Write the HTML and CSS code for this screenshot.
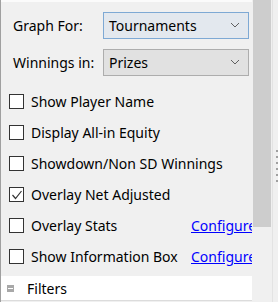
FILE: index.html
```html
<!DOCTYPE html>
<html lang="en">
<head>
    <meta charset="UTF-8">
    <title>Graph Options</title>
    <link rel="stylesheet" href="styles.css">
</head>
<body>

<div class="window">
    <div class="panel">
        <div class="options">
            <!-- Combo rows -->
            <div class="field">
                <label class="field-label">Graph For:</label>
                <div class="combo combo-focus">
                    <span>Tournaments</span>
                    <svg class="chevron" width="10" height="6" viewBox="0 0 10 6"><path d="M1 1 L5 5 L9 1" fill="none" stroke="#606060" stroke-width="1"/></svg>
                </div>
            </div>
            <div class="field">
                <label class="field-label">Winnings in:</label>
                <div class="combo">
                    <span>Prizes</span>
                    <svg class="chevron" width="10" height="6" viewBox="0 0 10 6"><path d="M1 1 L5 5 L9 1" fill="none" stroke="#606060" stroke-width="1"/></svg>
                </div>
            </div>

            <!-- Checkbox rows -->
            <div class="checks">
                <div class="check"><span class="box"></span>Show Player Name</div>
                <div class="check"><span class="box"></span>Display All-in Equity</div>
                <div class="check"><span class="box"></span>Showdown/Non SD Winnings</div>
                <div class="check"><span class="box">
                    <svg width="12" height="12" viewBox="0 0 12 12"><path d="M1.5 6 L4.5 9.5 L10.5 2" fill="none" stroke="#333" stroke-width="1.2"/></svg>
                </span>Overlay Net Adjusted</div>
                <div class="check"><span class="box"></span><span class="check-text">Overlay Stats</span><a class="link" href="#">Configure</a></div>
                <div class="check"><span class="box"></span><span class="check-text">Show Information Box</span><a class="link" href="#">Configure</a></div>
            </div>
        </div>

        <div class="section">
            <span class="collapse"></span>
            Filters
        </div>
    </div>

    <div class="scrollbar"><div class="thumb"></div></div>
    <div class="grip"><div class="dots"></div></div>
</div>

</body>
</html>
```

FILE: styles.css
```css
body {
    margin: 0;
    padding: 0;
    background-color: #f0f0f0;
    font-family: "Noto Sans", "Open Sans", sans-serif;
    font-size: 14px;
    color: #000;
}
.window {
    display: flex;
    height: 302px;
    overflow: hidden;
}
.panel {
    width: 252px;
    border-left: 1px solid #a0a0a0;
    overflow: hidden;
}
.options {
    border-top: 2px solid #fbfbfb;
    padding-top: 9px;
    height: 265px;
}
.field {
    display: flex;
    align-items: center;
    height: 28px;
    margin-bottom: 9px;
}
.field-label {
    width: 90px;
    padding-left: 12px;
}
.combo {
    width: 146px;
    height: 27px;
    border: 1px solid #adadad;
    background-color: #e1e1e1;
    display: flex;
    align-items: center;
    justify-content: space-between;
    padding: 0 8px 0 5px;
    box-sizing: border-box;
}
.combo-focus {
    border-color: #7ea9d4;
    background-color: #e3e8ee;
}
.chevron {
    display: block;
}
.checks {
    margin-top: 10px;
}
.check {
    display: flex;
    align-items: center;
    height: 31px;
    padding-left: 8px;
    white-space: nowrap;
}
.box {
    flex: none;
    width: 13px;
    height: 13px;
    border: 1px solid #333;
    background-color: #fff;
    margin-right: 7px;
    display: flex;
    align-items: center;
    justify-content: center;
}
.check-text {
    flex: none;
    width: 160px;
}
.link {
    color: #0000ff;
}
.section {
    background-color: #fff;
    border-bottom: 1px solid #dcdcdc;
    height: 24px;
    display: flex;
    align-items: center;
    padding-left: 6px;
}
.collapse {
    width: 7px;
    height: 7px;
    background-color: #a8a8a8;
    margin-right: 13px;
    position: relative;
}
.collapse::after {
    content: "";
    position: absolute;
    left: 1px;
    top: 3px;
    width: 5px;
    height: 1px;
    background-color: #fff;
}
.scrollbar {
    width: 20px;
    background-color: #f0f0f0;
}
.thumb {
    margin: 0 1px;
    height: 227px;
    background-color: #cdcdcd;
}
.grip {
    width: 5px;
    border-left: 1px solid #e3e3e3;
    display: flex;
    justify-content: flex-end;
}
.dots {
    width: 2px;
    height: 36px;
    margin-top: 150px;
    background: repeating-linear-gradient(to bottom, #a0a0a0 0 2px, transparent 2px 6px);
}
```
